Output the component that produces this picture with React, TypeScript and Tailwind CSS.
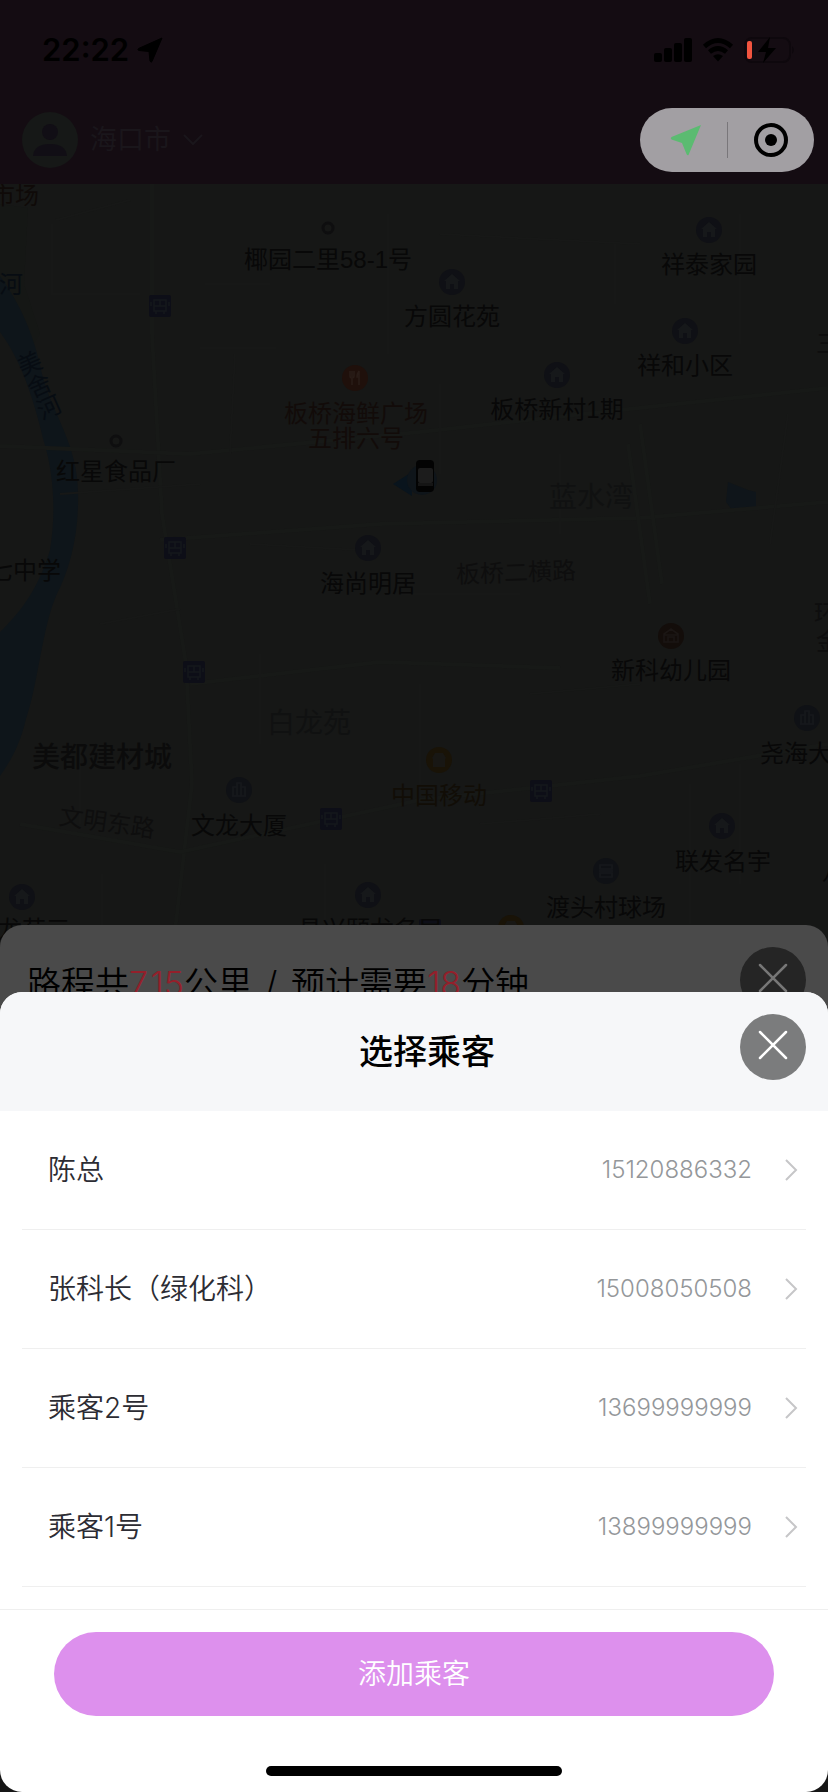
import React from "react";

type PinKind = "home" | "bus" | "dot" | "food" | "school" | "shop" | "tower" | "court";
type Pin = { kind: PinKind; x: number; y: number };
type Label = { text: string; x: number; y: number; className: string };

const pins: Pin[] = [
  { kind: "dot", x: 328, y: 44 },
  { kind: "dot", x: 116, y: 257 },
  { kind: "home", x: 709, y: 46 },
  { kind: "home", x: 452, y: 98 },
  { kind: "home", x: 685, y: 147 },
  { kind: "home", x: 557, y: 191 },
  { kind: "home", x: 368, y: 364 },
  { kind: "home", x: 722, y: 642 },
  { kind: "home", x: 22, y: 713 },
  { kind: "home", x: 368, y: 711 },
  { kind: "food", x: 355, y: 194 },
  { kind: "school", x: 671, y: 452 },
  { kind: "shop", x: 439, y: 576 },
  { kind: "shop", x: 511, y: 744 },
  { kind: "tower", x: 239, y: 606 },
  { kind: "tower", x: 807, y: 534 },
  { kind: "court", x: 606, y: 687 },
  { kind: "bus", x: 160, y: 122 },
  { kind: "bus", x: 175, y: 364 },
  { kind: "bus", x: 194, y: 488 },
  { kind: "bus", x: 331, y: 635 },
  { kind: "bus", x: 541, y: 607 },
  { kind: "bus", x: 430, y: 746 },
];

const plain = "text-2xl text-[#080808]";
const road = "text-2xl text-[#0e0e0e]";
const area = "text-[28px] text-[#101111]";

const labels: Label[] = [
  { text: "市场", x: 15, y: 10, className: "text-2xl text-[#0f0a08]" },
  { text: "河", x: 11, y: 99, className: "text-2xl text-[#070c12]" },
  { text: "椰园二里58-1号", x: 328, y: 74, className: plain },
  { text: "祥泰家园", x: 709, y: 79, className: plain },
  { text: "方圆花苑", x: 452, y: 131, className: plain },
  { text: "祥和小区", x: 685, y: 180, className: plain },
  { text: "板桥新村1期", x: 557, y: 224, className: plain },
  { text: "板桥海鲜广场", x: 356, y: 228, className: "text-2xl text-[#120b09]" },
  { text: "五排六号", x: 356, y: 253, className: "text-2xl text-[#120b09]" },
  { text: "红星食品厂", x: 116, y: 286, className: plain },
  { text: "美舍河", x: 37, y: 200, className: "text-2xl text-[#070c12] [writing-mode:vertical-rl] -rotate-24" },
  { text: "蓝水湾", x: 591, y: 312, className: area },
  { text: "七中学", x: 25, y: 385, className: plain },
  { text: "海尚明居", x: 368, y: 398, className: plain },
  { text: "板桥二横路", x: 516, y: 387, className: "text-2xl text-[#0e0e0e] -rotate-2" },
  { text: "新科幼儿园", x: 671, y: 485, className: plain },
  { text: "白龙苑", x: 309, y: 538, className: area },
  { text: "美都建材城", x: 102, y: 572, className: "text-[28px] font-medium text-[#0b0b0b]" },
  { text: "尧海大厦", x: 808, y: 568, className: plain },
  { text: "中国移动", x: 439, y: 610, className: "text-2xl text-[#110d06]" },
  { text: "文龙大厦", x: 239, y: 640, className: plain },
  { text: "文明东路", x: 107, y: 637, className: "text-2xl text-[#0e0e0e] rotate-8" },
  { text: "联发名宇", x: 723, y: 676, className: plain },
  { text: "渡头村球场", x: 606, y: 722, className: plain },
  { text: "龙苑三", x: 34, y: 744, className: plain },
  { text: "昌兴颐龙名居", x: 370, y: 744, className: plain },
  { text: "三", x: 828, y: 158, className: road },
  { text: "环", x: 826, y: 428, className: road },
  { text: "金", x: 828, y: 456, className: road },
  { text: "八", x: 834, y: 686, className: plain },
];

const passengers = [
  { name: "陈总", phone: "15120886332" },
  { name: "张科长（绿化科）", phone: "15008050508" },
  { name: "乘客2号", phone: "13699999999" },
  { name: "乘客1号", phone: "13899999999" },
];

function PinIcon({ kind }: { kind: PinKind }) {
  if (kind === "dot") {
    return (
      <svg width="28" height="28" viewBox="0 0 28 28">
        <circle cx="14" cy="14" r="5" fill="none" stroke="#0e0e0f" strokeWidth="3" />
      </svg>
    );
  }
  if (kind === "bus") {
    return (
      <svg width="28" height="28" viewBox="0 0 28 28">
        <rect x="3" y="3" width="22" height="22" rx="2" fill="#0d0e17" />
        <path d="M8 8h12v11H8zM8 14h12M14 8v6M10 19v3M18 19v3M5 10v4M23 10v4" fill="none" stroke="#15181c" strokeWidth="1.6" />
      </svg>
    );
  }
  const disc = {
    home: "#0f1015",
    food: "#1f100b",
    school: "#130d0a",
    shop: "#191307",
    tower: "#0f1115",
    court: "#0f1115",
  }[kind];
  return (
    <svg width="28" height="28" viewBox="0 0 28 28">
      <circle cx="14" cy="14" r="13" fill={disc} />
      {kind === "home" && <path d="M14 6l8 7h-2v8h-4v-5h-4v5H8v-8H6z" fill="#16181a" />}
      {kind === "food" && <path d="M9 7v5q0 2 2 2v7M13 7v5q0 2-2 2M11 7v6M18 7v14M18 7q-2 3-2 6h2" fill="none" stroke="#291c17" strokeWidth="1.6" />}
      {kind === "school" && <path d="M7 12l7-5 7 5v8H7zM11 20v-5h6v5M7 13h14" fill="none" stroke="#1b1614" strokeWidth="1.6" />}
      {kind === "shop" && <path d="M7 12l3-5h8l3 5-1 1v8H8v-8z" fill="#181714" />}
      {kind === "tower" && <path d="M7 20h14M8 20v-9h4v9M12 20V7h4v13M16 20v-9h4v9" fill="none" stroke="#17191c" strokeWidth="1.6" />}
      {kind === "court" && <path d="M8 8h12v4H8zM8 16h12v4H8zM7 14h14" fill="none" stroke="#17191c" strokeWidth="1.6" />}
    </svg>
  );
}

function MapGround() {
  return (
    <svg className="absolute left-0 top-0 h-full w-full" viewBox="0 0 828 773" preserveAspectRatio="xMinYMin slice" aria-hidden="true">
      <path d="M0 20L28 24L24 100L40 150L20 180L0 110z" fill="#151715" />
      <path
        d="M0 92C20 120 34 150 42 190C52 230 78 260 78 310C79 350 70 385 56 412C42 445 38 500 26 535C20 560 12 575 0 592V448C24 425 40 400 50 366C56 330 54 290 44 258C36 225 24 180 0 148z"
        fill="#0e151a"
      />
      <path d="M728 298l20 8 8 2v16l-24 2-6-8z" fill="#0f151a" />
      <g fill="none" stroke="#171917" strokeWidth="4">
        <path d="M152 0V150L162 330L186 480L192 600L172 773" />
        <path d="M0 262L190 270L420 248L620 226L828 204" />
        <path d="M160 356L380 340L640 334L828 318" />
        <path d="M190 500L380 478L560 484" />
        <path d="M20 640L180 668L420 616L640 592L828 560" />
        <path d="M628 260L650 420M640 240L662 400" />
      </g>
      <g fill="none" stroke="#171817" strokeWidth="2">
        <path d="M56 36L130 16M52 40V110H140M205 100H270M200 164H276M235 170L230 270M388 30V170" />
        <path d="M440 50L640 60M615 60V120M740 30V160M788 230L770 360" />
        <path d="M440 200V290M560 270V350M60 310L200 300M250 360L360 366M400 410H520" />
        <path d="M100 440L180 425M260 470V560M420 500V600M530 510L640 500M690 600V740" />
        <path d="M80 560V640M102 690V760M325 680V760M480 640L600 630M740 580V700" />
      </g>
    </svg>
  );
}

function StatusBar() {
  return (
    <div className="flex h-22 items-center justify-between pl-[42px] pr-8 pt-3 text-black">
      <div className="flex items-center gap-2">
        <span className="text-[31px] font-semibold leading-10">22:22</span>
        <svg width="26" height="26" viewBox="0 0 26 26" aria-hidden="true">
          <path d="M25 1L15 24.500Q14 26 13 24L12 14.500L2 13.500Q0 13 1.500 11.500z" fill="currentColor" stroke="currentColor" />
        </svg>
      </div>
      <div className="flex items-center gap-[10px]">
        <svg width="38" height="24" viewBox="0 0 38 24" aria-hidden="true">
          <rect x="0" y="15" width="8" height="9" rx="2" />
          <rect x="10" y="10" width="8" height="14" rx="2" />
          <rect x="20" y="5" width="8" height="19" rx="2" />
          <rect x="30" y="0" width="8" height="24" rx="2" />
        </svg>
        <svg width="32" height="24" viewBox="0 0 32 24" aria-hidden="true">
          <path d="M2.500 8.500Q16-3.500 29.500 8.500M7.500 14Q16 7 24.500 14" fill="none" stroke="currentColor" strokeWidth="4.600" />
          <path d="M11 18Q16 14.500 21 18L16 23.500z" />
        </svg>
        <svg width="52" height="26" viewBox="0 0 52 26" aria-hidden="true">
          <rect x="1" y="1" width="45" height="24" rx="7" fill="none" stroke="#0e080d" strokeWidth="2" />
          <path d="M48 9q4 4 0 8z" fill="#0e080d" />
          <rect x="3" y="4" width="5" height="18" rx="2" fill="#f2543f" />
          <path d="M26 0L14 15h8l-3 11L32 11h-8z" />
        </svg>
      </div>
    </div>
  );
}

function CloseIcon() {
  return (
    <svg width="30" height="30" viewBox="0 0 30 30" aria-hidden="true">
      <path d="M2 2L28 28M28 2L2 28" stroke="currentColor" strokeWidth="2.500" strokeLinecap="round" />
    </svg>
  );
}

export default function App() {
  return (
    <div className="flex min-h-screen flex-col overflow-hidden bg-[#161616] font-['Inter','Noto_Sans_CJK_SC',sans-serif]">
      <header className="h-46 shrink-0 bg-[#140c12]">
        <StatusBar />
        <div className="flex items-center justify-between pl-[22px] pr-[14px] pt-5">
          <button type="button" className="flex items-center text-[#1a161b]">
            <svg width="56" height="56" viewBox="0 0 56 56" aria-hidden="true">
              <circle cx="28" cy="28" r="28" fill="#161817" />
              <circle cx="28" cy="20" r="8" fill="#110e15" />
              <path d="M11 44Q12 32 28 32T45 44z" fill="#110e15" />
            </svg>
            <span className="ml-3 text-[27px] leading-10">海口市</span>
            <svg className="ml-3" width="20" height="12" viewBox="0 0 20 12" aria-hidden="true">
              <path d="M1 1L10 10L19 1" fill="none" stroke="currentColor" strokeWidth="2" />
            </svg>
          </button>
          <div className="flex h-16 w-[174px] items-center rounded-full bg-[#a29fa3]">
            <button type="button" aria-label="定位" className="flex w-[87px] justify-center pl-1">
              <svg width="32" height="32" viewBox="0 0 32 32" aria-hidden="true">
                <path d="M31 1L18.500 31Q17.500 32 16.500 30L12 19L1.500 15.500Q0 14 1.500 13z" fill="#5bbb71" />
              </svg>
            </button>
            <span className="h-9 w-px bg-[#79767a]" />
            <button type="button" aria-label="关闭小程序" className="flex flex-1 justify-center">
              <svg width="34" height="34" viewBox="0 0 34 34" aria-hidden="true">
                <circle cx="17" cy="17" r="15" fill="none" stroke="#000" strokeWidth="4" />
                <circle cx="17" cy="17" r="6" />
              </svg>
            </button>
          </div>
        </div>
      </header>

      <main className="relative flex-1 overflow-hidden bg-[#161716] font-['Liberation_Sans','Noto_Sans_CJK_SC',sans-serif]">
        <MapGround />
        {pins.map((p, i) => (
          <span key={i} className="absolute -translate-x-1/2 -translate-y-1/2" style={{ left: p.x, top: p.y }}>
            <PinIcon kind={p.kind} />
          </span>
        ))}
        {labels.map((l) => (
          <span key={l.text} className="absolute -translate-x-1/2 -translate-y-1/2 pt-1" style={{ left: l.x, top: l.y }}>
            <span className={`block whitespace-nowrap leading-6 ${l.className}`}>{l.text}</span>
          </span>
        ))}
        <svg className="absolute left-[392px] top-[270px]" width="50" height="46" viewBox="0 0 50 46" aria-hidden="true">
          <path d="M1 30L20 18V42z" fill="#09141d" />
          <circle cx="30" cy="26" r="15" fill="#0f151a" />
          <rect x="24" y="6" width="18" height="32" rx="4" fill="#030303" />
          <rect x="26" y="14" width="15" height="15" rx="2" fill="#1c1c1c" />
          <rect x="26" y="29" width="15" height="3" fill="#151515" />
        </svg>
      </main>

      <section className="relative -mt-8 flex h-[99px] shrink-0 items-start justify-between rounded-t-[22px] bg-[#4a4a4a] pl-[27px] pr-[22px] pt-[22px]">
        <p className="mt-[13px] text-[34px] font-[350] leading-12 text-black">
          路程共<span className="font-light text-[#93202b]">7.15</span>公里 <span className="mx-1">/</span> 预计需要<span className="font-light text-[#93202b]">18</span>分钟
        </p>
        <button type="button" aria-label="关闭行程" className="flex size-[66px] items-center justify-center rounded-full bg-[#252525] pb-1 text-[#777]">
          <CloseIcon />
        </button>
      </section>

      <section role="dialog" aria-labelledby="sheet-title" className="relative -mt-8 shrink-0 overflow-hidden rounded-[22px] bg-white">
        <div className="flex h-[119px] items-start bg-[#f6f7f9] pl-[114px] pr-[22px] pt-[22px]">
          <h1 id="sheet-title" className="mt-[14px] flex-1 text-center text-[34px] font-medium leading-12 text-black">选择乘客</h1>
          <button type="button" aria-label="关闭" className="flex size-[66px] items-center justify-center rounded-full bg-[#7b7c7d] pb-1 text-white">
            <CloseIcon />
          </button>
        </div>
        <ul className="mb-[22px] px-[22px]">
          {passengers.map((p) => (
            <li key={p.phone} className="border-b border-[#efefef]">
              <button type="button" className="flex h-[118px] w-full items-center pl-[26px] pr-2 text-left">
                <span className="flex-1 text-[28px] font-[350] leading-10 text-[#2c2c33]">{p.name}</span>
                <span className="text-2xl font-light text-[#94979a]">{p.phone}</span>
                <svg className="ml-8" width="14" height="22" viewBox="0 0 14 22" aria-hidden="true">
                  <path d="M2 1L12 11L2 21" fill="none" stroke="#c6c6c8" strokeWidth="2" />
                </svg>
              </button>
            </li>
          ))}
        </ul>
        <div className="border-t border-[#efefef] px-[54px] pt-[22px]">
          <button type="button" className="h-21 w-full rounded-full bg-[#dd90ed] text-[28px] font-[350] leading-10 text-white">添加乘客</button>
        </div>
        <div className="mx-auto mb-4 mt-[50px] h-[10px] w-[296px] rounded-full bg-black" />
      </section>
    </div>
  );
}
